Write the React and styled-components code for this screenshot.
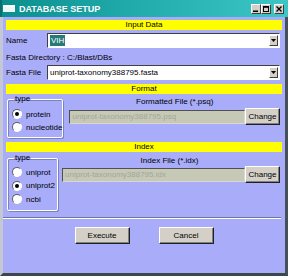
import React from 'react';
import styled, { createGlobalStyle } from 'styled-components';

const Global = createGlobalStyle`
  html, body { margin: 0; padding: 0; background: #a9adf9; }
  body { font-family: "Liberation Sans", Arial, sans-serif; font-size: 8px; color: #000; }
`;

const Win = styled.div`
  width: 288px;
  height: 276px;
  display: flex;
  flex-direction: column;
  overflow: hidden;
`;

const TitleBar = styled.div`
  height: 17px;
  flex: none;
  display: flex;
  align-items: center;
  background: linear-gradient(to right, #0b8e8e, #1fa8a8 40%, #3cc6c6);
  border-left: 2px solid #08706f;
  padding: 0 4px 0 1px;
`;

const TitleIcon = styled.div`
  width: 12px;
  height: 5px;
  background: #eef6f6;
  border-top: 2px solid #ffffff;
  margin-right: 4px;
`;

const TitleText = styled.div`
  flex: 1;
  color: #ffffff;
  font-weight: bold;
  font-size: 9px;
  letter-spacing: 0;
`;

const CapBtn = styled.div`
  width: 10px;
  height: 10px;
  box-sizing: border-box;
  background: #d4d0c8;
  border: 1px solid;
  border-color: #ffffff #404040 #404040 #ffffff;
  display: flex;
  align-items: center;
  justify-content: center;
  margin-left: ${p => p.$gap}px;
`;

const Frame = styled.div`
  flex: 1;
  display: flex;
  flex-direction: column;
  background: #a9adf9;
  border-left: 3px solid #c4c8d4;
  border-right: 3px solid #46505a;
  border-bottom: 3px solid #3c4848;
`;

const Bar = styled.div`
  background: #ffff00;
  height: 10px;
  line-height: 10px;
  text-align: center;
  margin: ${p => p.$mt}px 3px 0 3px;
`;

const Row = styled.div`
  display: flex;
  align-items: center;
  height: 15px;
  margin: ${p => p.$mt}px 5px 0 0;
`;

const Label = styled.div`
  width: 41px;
  padding-left: 3px;
  white-space: nowrap;
`;

const Combo = styled.div`
  flex: 1;
  height: 15px;
  box-sizing: border-box;
  background: #fff;
  border: 1px solid;
  border-color: #404040 #ffffff #ffffff #404040;
  display: flex;
  align-items: center;
  padding-left: 2px;
  white-space: nowrap;
`;

const Sel = styled.span`
  background: #287a7a;
  color: #fff;
  padding: 1px 1px;
`;

const Drop = styled.div`
  margin-left: auto;
  width: 9px;
  height: 11px;
  box-sizing: border-box;
  background: #d4d0c8;
  border: 1px solid;
  border-color: #ffffff #404040 #404040 #ffffff;
  margin-right: 1px;
  display: flex;
  align-items: center;
  justify-content: center;
`;

const Arrow = () => (
  <svg width="5" height="3" viewBox="0 0 5 3"><path d="M0 0H5L2.5 3Z" fill="#000" /></svg>
);

const Info = styled.div`
  height: 10px;
  line-height: 10px;
  padding-left: 3px;
  margin-top: ${p => p.$mt}px;
`;

const Section = styled.div`
  display: flex;
  align-items: flex-start;
  margin: ${p => p.$mt}px 5px 0 4px;
`;

const Group = styled.fieldset`
  margin: 0 ${p => p.$gap}px 0 0;
  width: ${p => p.$w}px;
  height: ${p => p.$h}px;
  flex: none;
  box-sizing: border-box;
  border: 1px solid #ffffff;
  box-shadow: inset 1px 1px 0 #7c84b4, 1px 1px 0 #7c84b4;
  border-radius: 2px;
  padding: ${p => p.$pt}px 0 0 4px;
  display: flex;
  flex-direction: column;
  gap: ${p => p.$rg}px;
  legend {
    padding: 0 1px;
    margin-left: 2px;
    font-size: 8px;
    line-height: 8px;
  }
`;

const Radio = styled.label`
  display: flex;
  align-items: center;
  gap: 4px;
  height: 12px;
  white-space: nowrap;
`;

const Dot = styled.span`
  width: 10px;
  height: 10px;
  box-sizing: border-box;
  border-radius: 50%;
  background: #fff;
  border: 1px solid;
  border-color: #606060 #ffffff #ffffff #606060;
  display: flex;
  align-items: center;
  justify-content: center;
  &::after {
    content: '';
    width: 4px;
    height: 4px;
    border-radius: 50%;
    background: ${p => (p.$on ? '#000' : 'transparent')};
  }
`;

const FileCol = styled.div`
  flex: 1;
  display: flex;
  flex-direction: column;
  margin-top: 2px;
`;

const FileLabel = styled.div`
  text-align: center;
  height: 10px;
  line-height: 10px;
  margin-left: ${p => p.$ml || 0}px;
`;

const FileRow = styled.div`
  display: flex;
  align-items: center;
  margin-top: ${p => p.$mt}px;
`;

const FileBox = styled.div`
  flex: 1;
  height: 14px;
  box-sizing: border-box;
  background: #c7c9b7;
  border: 1px solid;
  border-color: #505050 #d8d8d0 #d8d8d0 #505050;
  color: #a2a696;
  line-height: 12px;
  padding-left: 2px;
  white-space: nowrap;
  overflow: hidden;
`;

const Btn = styled.div`
  width: ${p => p.$w}px;
  height: ${p => p.$h}px;
  flex: none;
  box-sizing: border-box;
  background: #d4d0c8;
  border: 1px solid;
  border-color: #ffffff #202020 #202020 #ffffff;
  box-shadow: inset -1px -1px 0 #808080;
  display: flex;
  align-items: center;
  justify-content: center;
`;

const Sep = styled.div`
  height: 0;
  border-top: 1px solid #6e76a0;
  border-bottom: 1px solid #ffffff;
  margin: 6px 4px 0 0;
`;

const Footer = styled.div`
  display: flex;
  justify-content: center;
  gap: 29px;
  margin-top: 8px;
`;

export default function App() {
  return (
    <>
      <Global />
      <Win>
        <TitleBar>
          <TitleIcon />
          <TitleText>DATABASE SETUP</TitleText>
          <CapBtn $gap={0}>
            <svg width="6" height="6" viewBox="0 0 6 6"><rect x="0" y="4.5" width="5" height="1.5" fill="#000" /></svg>
          </CapBtn>
          <CapBtn $gap={0}>
            <svg width="6" height="6" viewBox="0 0 6 6"><rect x="0.5" y="0.5" width="5" height="5" fill="none" stroke="#000" /><rect x="0" y="0" width="6" height="1.8" fill="#000" /></svg>
          </CapBtn>
          <CapBtn $gap={3}>
            <svg width="6" height="6" viewBox="0 0 6 6"><path d="M0.5 0.5L5.5 5.5M5.5 0.5L0.5 5.5" stroke="#000" strokeWidth="1.3" /></svg>
          </CapBtn>
        </TitleBar>
        <Frame>
          <Bar $mt={3}>Input Data</Bar>
          <Row $mt={3}>
            <Label>Name</Label>
            <Combo><Sel>VIH</Sel><Drop><Arrow /></Drop></Combo>
          </Row>
          <Info $mt={5}>Fasta Directory : C:/Blast/DBs</Info>
          <Row $mt={2}>
            <Label>Fasta File</Label>
            <Combo>uniprot-taxonomy388795.fasta<Drop><Arrow /></Drop></Combo>
          </Row>
          <Bar $mt={4}>Format</Bar>
          <Section $mt={1}>
            <Group $w={56} $h={43} $gap={6} $pt={5} $rg={1}>
              <legend>type</legend>
              <Radio><Dot $on />protein</Radio>
              <Radio><Dot />nucleotide</Radio>
            </Group>
            <FileCol>
              <FileLabel>Formatted File (*.psq)</FileLabel>
              <FileRow $mt={1}>
                <FileBox>uniprot-taxonomy388795.psq</FileBox>
                <Btn $w={35} $h={17}>Change</Btn>
              </FileRow>
            </FileCol>
          </Section>
          <Bar $mt={4}>Index</Bar>
          <Section $mt={2}>
            <Group $w={51} $h={57} $gap={4} $pt={4} $rg={1.5}>
              <legend>type</legend>
              <Radio><Dot />uniprot</Radio>
              <Radio><Dot $on />uniprot2</Radio>
              <Radio><Dot />ncbi</Radio>
            </Group>
            <FileCol>
              <FileLabel $ml={-3}>Index File (*.idx)</FileLabel>
              <FileRow $mt={0}>
                <FileBox>uniprot-taxonomy388795.idx</FileBox>
                <Btn $w={35} $h={17}>Change</Btn>
              </FileRow>
            </FileCol>
          </Section>
          <Sep />
          <Footer>
            <Btn $w={55} $h={17}>Execute</Btn>
            <Btn $w={55} $h={17}>Cancel</Btn>
          </Footer>
        </Frame>
      </Win>
    </>
  );
}
